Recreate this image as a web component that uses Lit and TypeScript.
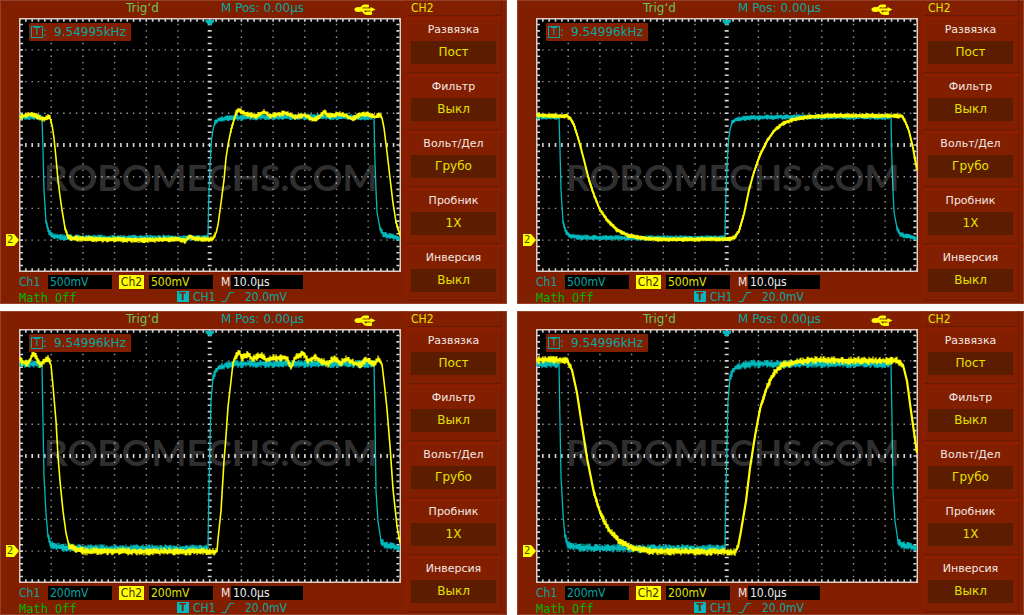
import { LitElement, html, css, svg } from "lit";
import { customElement, property } from "lit/decorators.js";

type Point = [number, number];

interface Capture {
  frequency: string;
  scale: string;
  watermark: Point;
  thickness: number;
  noise: number;
  ch1: Point[];
  ch2: Point[];
}

/* Trace points are in panel coordinates; the graticule starts at (19, 18). */
const ORIGIN_X = 19;
const ORIGIN_Y = 18;
const DIV = 31.7;

const CH1_500: Point[] = [
  [20, 117], [42, 117], [43, 150], [44, 190], [46, 222], [49, 232], [53, 236],
  [60, 237], [80, 238], [150, 238], [208, 238], [208.6, 205], [210, 165],
  [211.5, 140], [213, 130], [215, 122], [219, 119.5], [230, 118], [260, 117],
  [374, 117], [374.6, 150], [376, 190], [377, 212], [380, 228], [383, 234],
  [388, 236], [395, 237], [400, 239],
];

const CH1_200: Point[] = [
  [20, 53], [42, 53], [42.6, 90], [44, 165], [46, 203], [48, 225], [51, 234],
  [60, 236], [80, 237.5], [208, 237.5], [208.6, 200], [210, 130], [211, 90],
  [213, 67], [216, 59], [220, 56], [235, 53], [374, 53], [375, 110],
  [376, 180], [378, 210], [381, 230], [385, 234], [400, 237],
];

const CAPTURES: Capture[] = [
  {
    frequency: "9.54995kHz", scale: "500mV", watermark: [44, 191], thickness: 1.6, noise: 1.9,
    ch1: CH1_500,
    ch2: [
      [20, 117], [30, 114.5], [36, 116], [40, 118], [44, 119], [48, 116.5], [50, 118],
      [52, 125], [54, 138], [56, 158], [58, 180], [60, 196], [62, 210], [65, 228],
      [68, 237], [72, 238.5], [100, 239.5], [150, 240], [180, 239], [185, 241],
      [190, 236.5], [195, 239], [213, 239], [216, 233], [218, 225], [221, 203],
      [224, 180], [226, 158], [228, 145], [231, 130], [234, 120], [236, 113],
      [239, 110], [244, 113], [250, 115], [256, 116], [264, 112], [270, 116],
      [285, 113], [295, 117], [305, 115], [312, 119], [318, 118], [324, 112],
      [330, 116], [337, 114], [345, 115], [352, 119], [360, 115], [368, 114],
      [375, 117], [380, 115], [382, 118], [384, 128], [387, 152], [390, 178],
      [393, 203], [396, 222], [399, 232], [400, 236],
    ],
  },
  {
    frequency: "9.54996kHz", scale: "500mV", watermark: [49, 191], thickness: 2, noise: 1.4,
    ch1: CH1_500,
    ch2: [
      [20, 115], [30, 116], [50, 116], [53, 118], [57, 125], [62, 141], [67, 160],
      [72, 180], [77, 195], [83, 210], [90, 220], [100, 230], [112, 236],
      [130, 238.5], [150, 239.5], [213, 239], [218, 237], [222, 231], [227, 214],
      [232, 190], [237, 172], [243, 155], [250, 141], [257, 131], [265, 124],
      [275, 120], [290, 117], [310, 115.5], [385, 116], [388, 121], [392, 131],
      [396, 148], [400, 170],
    ],
  },
  {
    frequency: "9.54996kHz", scale: "200mV", watermark: [44, 155], thickness: 1.6, noise: 2.8,
    ch1: CH1_200,
    ch2: [
      [20, 47], [22, 51], [28, 53], [33, 43], [36, 46], [40, 54], [45, 49], [48, 47],
      [51, 54], [53, 75], [56, 110], [58, 145], [60, 170], [63, 200], [66, 222],
      [69, 235], [75, 238], [85, 240.5], [217, 240.5], [218, 228], [221, 200],
      [224, 150], [226, 125], [228, 96], [231, 70], [233, 52], [236, 45], [239, 41],
      [242, 47], [248, 43], [252, 48], [262, 44], [266, 49], [275, 47], [287, 47],
      [291, 57], [295, 47], [303, 42], [308, 50], [315, 46], [322, 50], [328, 53],
      [334, 47], [340, 52], [347, 48], [354, 52], [360, 54], [366, 49], [374, 53],
      [378, 48], [382, 53], [384, 70], [387, 98], [390, 135], [393, 178], [397, 215],
      [400, 232],
    ],
  },
  {
    frequency: "9.54996kHz", scale: "200mV", watermark: [49, 155], thickness: 2.2, noise: 3,
    ch1: CH1_200,
    ch2: [
      [20, 49], [48, 49], [51, 51], [55, 59], [60, 82], [65, 115], [70, 147], [77, 182],
      [84, 204], [92, 219], [102, 230], [115, 237], [130, 240], [218, 241],
      [221, 236], [224, 220], [229, 190], [233, 157], [238, 125], [243, 98],
      [250, 76], [257, 62], [265, 54], [280, 51], [295, 49], [380, 50], [386, 54],
      [390, 70], [394, 100], [400, 142],
    ],
  },
];

const MENU: [string, string][] = [
  ["Развязка", "Пост"],
  ["Фильтр", "Выкл"],
  ["Вольт/Дел", "Грубо"],
  ["Пробник", "1X"],
  ["Инверсия", "Выкл"],
];

function random(seed: number): () => number {
  let s = seed;
  return () => {
    s = (s * 16807) % 2147483647;
    return s / 2147483647;
  };
}

function linePath(points: Point[]): string {
  return points
    .map(([x, y], i) => `${i ? "L" : "M"}${x - ORIGIN_X} ${y - ORIGIN_Y}`)
    .join("");
}

/* Vertical noise bars along the parts of the trace that are not edges. */
function noisePath(points: Point[], amount: number, seed: number): string {
  const rnd = random(seed);
  let d = "";
  for (let i = 1; i < points.length; i++) {
    const [x0, y0] = points[i - 1];
    const [x1, y1] = points[i];
    const slope = Math.abs((y1 - y0) / (x1 - x0));
    if (slope > 3.5) continue;
    for (let x = x0; x < x1; x += 1) {
      const y = y0 + ((y1 - y0) * (x - x0)) / (x1 - x0) - ORIGIN_Y;
      const up = 1.2 + rnd() * amount;
      const down = 1.2 + rnd() * amount;
      d += `M${(x - ORIGIN_X).toFixed(1)} ${(y - up).toFixed(1)}V${(y + down).toFixed(1)}`;
    }
  }
  return d;
}

@customElement("scope-screen")
class ScopeScreen extends LitElement {
  @property({ attribute: false }) capture!: Capture;

  static styles = css`
    :host { display: block; }
    svg { display: block; width: 100%; height: auto; }
    .glass { fill: #000; stroke: #e2cbc5; stroke-width: 2; }
    .dots { stroke: #9a9a9a; stroke-width: 1.4; stroke-dasharray: 1.4 4.94; stroke-dashoffset: 0.7; fill: none; }
    .ticks { stroke: #d4d4d4; stroke-width: 4; stroke-dasharray: 1.6 4.74; stroke-dashoffset: 0.8; fill: none; }
    .edge { stroke-width: 3; }
    .ch1 { stroke: #00b9bd; fill: none; }
    .ch2 { stroke: #ffff00; fill: none; stroke-linejoin: round; }
    .pointer { fill: #00b9bd; }
    .watermark { font: 700 37px Lato, "Open Sans", sans-serif; fill: #fff; fill-opacity: 0.2; }
  `;

  render() {
    const c = this.capture;
    const cx = 190.7;
    const cy = 127;
    const left = cx - 6 * DIV;
    const right = cx + 6 * DIV;
    const top = cy - 4 * DIV;
    const bottom = cy + 4 * DIV;
    const columns = [-5, -4, -3, -2, -1, 1, 2, 3, 4, 5].map((n) => cx + n * DIV);
    const rows = [-3, -2, -1, 1, 2, 3].map((n) => cy + n * DIV);
    return html`
      <svg viewBox="0 0 382 254" role="img" aria-label="CH1, CH2">
        <rect class="glass" x="0.5" y="0.5" width="381" height="253" />
        ${columns.map((x) => svg`<path class="dots" d=${`M${x} ${top}V${bottom}`} />`)}
        ${rows.map((y) => svg`<path class="dots" d=${`M${left} ${y}H${right}`} />`)}
        <path class="ticks" d=${`M${left} ${cy}H${right}M${cx} ${top}V${bottom}`} />
        <path class="ticks edge" d=${`M${left} ${top + 2}H${right}M${left} ${bottom - 2}H${right}`} />
        <path class="ticks edge" d=${`M${left + 2} ${top}V${bottom}M${right - 2} ${top}V${bottom}`} />
        <path class="ch1" stroke-width="1.3" d=${linePath(c.ch1)} />
        <path class="ch1" stroke-width="1.2" d=${noisePath(c.ch1, c.noise + 0.3, 71)} />
        <path class="ch2" stroke-width=${c.thickness} d=${linePath(c.ch2)} />
        <path class="ch2" stroke-width="1.2" d=${noisePath(c.ch2, c.noise, 137)} />
        <path class="pointer" d="M186.500 2H195V4L190.700 7.500L186.500 4Z" />
        <text class="watermark" x=${c.watermark[0] - ORIGIN_X} y=${c.watermark[1] - ORIGIN_Y}>ROBOMECHS.COM</text>
      </svg>
    `;
  }
}

@customElement("scope-panel")
class ScopePanel extends LitElement {
  @property({ attribute: false }) capture!: Capture;

  static styles = css`
    :host {
      display: grid;
      grid-template-columns: minmax(0, 1fr) 101px;
      background: #821f00;
      box-shadow: inset 0 0 0 1px #94402a;
      font: 12px/14px "DejaVu Sans", sans-serif;
      color: #0aa5a0;
    }
    .main { padding: 0 5px 0 19px; }
    .top {
      display: grid;
      grid-template-columns: 107px 95px 133px 1fr;
      height: 18px;
      line-height: 16px;
    }
    .trig { grid-column: 1 / 3; padding-left: 107px; color: #6cc25e; }
    .trig, .pos { white-space: nowrap; }
    .usb { width: 22px; height: 12px; margin-top: 4px; fill: #ffff00; stroke: #ffff00; }
    .view { position: relative; }
    .frequency {
      position: absolute;
      left: 10px;
      top: 5px;
      display: flex;
      align-items: center;
      gap: 7px;
      height: 18px;
      width: 102px;
      box-sizing: border-box;
      padding: 0 2px;
      background: #821f00;
      border-radius: 1px;
    }
    .source { display: flex; align-items: center; }
    .source-t {
      border: 1px solid #0aa5a0;
      width: 10px;
      height: 10px;
      font-size: 10px;
      line-height: 10px;
      text-align: center;
    }
    .marker {
      position: absolute;
      left: -13px;
      top: 85%;
      width: 13px;
      height: 12px;
      padding-left: 1px;
      box-sizing: border-box;
      background: #ffff00;
      clip-path: polygon(0 0, 62% 0, 100% 50%, 62% 100%, 0 100%);
      color: #5a4a00;
      font-size: 10px;
      line-height: 12px;
    }
    .readouts, .trigger { display: flex; font-family: "DejaVu Sans Condensed", "DejaVu Sans", sans-serif; font-stretch: condensed; }
    .readouts { padding-top: 3px; }
    .readouts > span { height: 14px; white-space: nowrap; }
    .name { width: 29px; }
    .box { background: #000; box-sizing: border-box; width: 64px; padding-left: 2px; }
    .name2 { width: 25px; margin: 0 5px 0 7px; background: #ffff00; color: #3c2c00; text-align: center; }
    .yellow { color: #e3e300; }
    .time-name { width: 10px; margin-left: 8px; color: #eee; }
    .time { width: 72px; color: #eee; }
    .trigger { padding-top: 2px; height: 13px; line-height: 13px; }
    .math { width: 158px; color: #00b400; font: 12px/14px "DejaVu Sans Mono", monospace; }
    .trigger-t {
      width: 12px;
      height: 11px;
      margin-right: 4px;
      background: #00b9bd;
      color: #821f00;
      font: 700 10px/11px "DejaVu Sans", sans-serif;
      text-align: center;
    }
    .trigger-source { width: 28px; }
    .slope { width: 14px; height: 12px; margin-right: 10px; fill: none; stroke: #0aa5a0; }
    .menu { display: flex; flex-direction: column; gap: 2px; padding-right: 5px; }
    .title, .item {
      box-sizing: border-box;
      border: 1px solid #6b1900;
      border-top-color: #9c1c00;
      border-left-color: #9c1c00;
    }
    .title {
      height: 16px;
      padding-left: 4px;
      border-top: 0;
      line-height: 16px;
      color: #e3e300;
      font-family: "DejaVu Sans Condensed", "DejaVu Sans", sans-serif;
      font-stretch: condensed;
    }
    .item {
      display: flex;
      flex-direction: column;
      justify-content: flex-start;
      width: 100%;
      height: 55px;
      margin: 0;
      padding: 4px 5px 0 4px;
      background: none;
      border-radius: 0;
      font: inherit;
      text-align: center;
      color: #f4e8e4;
    }
    .label, .value { display: block; align-self: stretch; }
    .label { font-size: 11px; line-height: 14px; }
    .value { margin-top: 4px; background: #5c1c00; color: #e3e300; line-height: 23px; }
  `;

  render() {
    const c = this.capture;
    return html`
      <section class="main">
        <div class="top">
          <span class="trig">Trig‘d</span>
          <span class="pos">M Pos: 0.00µs</span>
          <svg class="usb" viewBox="0 0 22 12" aria-hidden="true">
            <ellipse cx="4.500" cy="5.500" rx="4" ry="2.500" stroke="none" />
            <path d="M4 5.500H18" stroke-width="2.200" fill="none" />
            <path d="M16.500 3L21.500 5.500L16.500 8Z" stroke="none" />
            <path d="M6 5L9 2H13M8 6L11 9.500H14" stroke-width="2" fill="none" />
            <rect x="9" y="0.500" width="6" height="3" rx="1" stroke="none" />
            <rect x="12" y="7.500" width="6" height="3.500" rx="1" stroke="none" />
          </svg>
        </div>
        <div class="view">
          <scope-screen .capture=${c}></scope-screen>
          <div class="frequency">
            <span class="source"><span class="source-t">T</span>:</span>
            <span>${c.frequency}</span>
          </div>
          <span class="marker">2</span>
        </div>
        <div class="readouts">
          <span class="name">Ch1</span>
          <span class="box">${c.scale}</span>
          <span class="name2">Ch2</span>
          <span class="box yellow">${c.scale}</span>
          <span class="time-name">M</span>
          <span class="box time">10.0µs</span>
        </div>
        <div class="trigger">
          <span class="math">Math Off</span>
          <span class="trigger-t">T</span>
          <span class="trigger-source">CH1</span>
          <svg class="slope" viewBox="0 0 14 12" aria-hidden="true">
            <path d="M0.500 10.500H4.500L9 1.500H13" stroke-width="1.200" />
          </svg>
          <span>20.0mV</span>
        </div>
      </section>
      <nav class="menu">
        <div class="title">CH2</div>
        ${MENU.map(
          ([label, value]) => html`
            <button class="item" type="button">
              <span class="label">${label}</span>
              <span class="value">${value}</span>
            </button>
          `
        )}
      </nav>
    `;
  }
}

@customElement("app-root")
class AppRoot extends LitElement {
  static styles = css`
    :host {
      display: grid;
      grid-template-columns: repeat(2, minmax(0, 1fr));
      gap: 7px 10px;
      background: #fff;
    }
  `;

  render() {
    return CAPTURES.map((c) => html`<scope-panel .capture=${c}></scope-panel>`);
  }
}
